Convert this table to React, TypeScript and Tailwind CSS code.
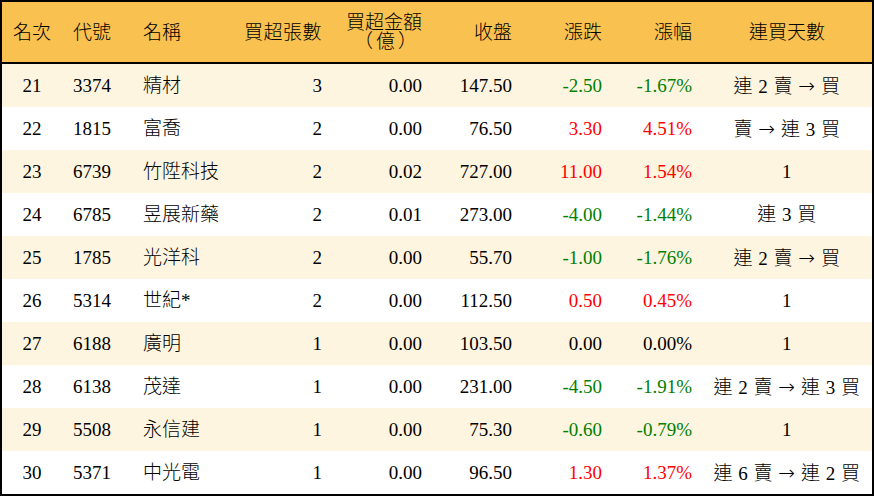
const rows = [
	{ rank: 21, code: "3374", name: "精材", lots: "3", amount: "0.00", close: "147.50", chg: "-2.50", pct: "-1.67%", streak: "連 2 賣 → 買" },
	{ rank: 22, code: "1815", name: "富喬", lots: "2", amount: "0.00", close: "76.50", chg: "3.30", pct: "4.51%", streak: "賣 → 連 3 買" },
	{ rank: 23, code: "6739", name: "竹陞科技", lots: "2", amount: "0.02", close: "727.00", chg: "11.00", pct: "1.54%", streak: "1" },
	{ rank: 24, code: "6785", name: "昱展新藥", lots: "2", amount: "0.01", close: "273.00", chg: "-4.00", pct: "-1.44%", streak: "連 3 買" },
	{ rank: 25, code: "1785", name: "光洋科", lots: "2", amount: "0.00", close: "55.70", chg: "-1.00", pct: "-1.76%", streak: "連 2 賣 → 買" },
	{ rank: 26, code: "5314", name: "世紀*", lots: "2", amount: "0.00", close: "112.50", chg: "0.50", pct: "0.45%", streak: "1" },
	{ rank: 27, code: "6188", name: "廣明", lots: "1", amount: "0.00", close: "103.50", chg: "0.00", pct: "0.00%", streak: "1" },
	{ rank: 28, code: "6138", name: "茂達", lots: "1", amount: "0.00", close: "231.00", chg: "-4.50", pct: "-1.91%", streak: "連 2 賣 → 連 3 買" },
	{ rank: 29, code: "5508", name: "永信建", lots: "1", amount: "0.00", close: "75.30", chg: "-0.60", pct: "-0.79%", streak: "1" },
	{ rank: 30, code: "5371", name: "中光電", lots: "1", amount: "0.00", close: "96.50", chg: "1.30", pct: "1.37%", streak: "連 6 賣 → 連 2 買" },
];

const grid =
	"grid grid-cols-[60px_70px_110px_90px_100px_90px_90px_90px_170px] items-center";

function tone(v: string) {
	if (v.startsWith("-")) return "text-[#008000]";
	if (parseFloat(v) > 0) return "text-[#ff0000]";
	return "text-black";
}

// the arrow glyph of Liberation Serif is tiny, so draw it from DejaVu Sans
function Streak({ text }: { text: string }) {
	const parts = text.split("→");
	return (
		<>
			{parts.map((p, i) => (
				<span key={i}>
					{i > 0 && (
						<span
							className="text-[20px]"
							style={{ fontFamily: '"DejaVu Sans", sans-serif' }}
						>
							→
						</span>
					)}
					{p}
				</span>
			))}
		</>
	);
}

export default function App() {
	return (
		<div
			className="w-[874px] h-[496px] border-2 border-black bg-white text-black text-[19px] font-light leading-none"
			style={{ fontFamily: '"Liberation Serif", "Noto Sans CJK TC", serif' }}
		>
			<div className={`${grid} h-[62px] bg-[#f9c14f] border-b-2 border-black`}>
				<div className="text-center">名次</div>
				<div className="pl-[11px]">代號</div>
				<div className="pl-[11px]">名稱</div>
				<div className="text-right pr-[10px] tracking-[0.5px]">買超張數</div>
				<div className="text-right pr-[10px] leading-[19px]">
					<div>買超金額</div>
					<div className="tracking-[3px] pr-[2px]">（億）</div>
				</div>
				<div className="text-right pr-[10px]">收盤</div>
				<div className="text-right pr-[10px]">漲跌</div>
				<div className="text-right pr-[10px]">漲幅</div>
				<div className="text-center">連買天數</div>
			</div>
			{rows.map((r, i) => (
				<div
					key={r.rank}
					className={`${grid} h-[43px] ${i % 2 === 0 ? "bg-[#fef5e0]" : "bg-white"}`}
				>
					<div className="text-center">{r.rank}</div>
					<div className="pl-[11px]">{r.code}</div>
					<div className="pl-[11px]">{r.name}</div>
					<div className="text-right pr-[10px]">{r.lots}</div>
					<div className="text-right pr-[10px]">{r.amount}</div>
					<div className="text-right pr-[10px]">{r.close}</div>
					<div className={`text-right pr-[10px] ${tone(r.chg)}`}>{r.chg}</div>
					<div className={`text-right pr-[10px] ${tone(r.pct)}`}>{r.pct}</div>
					<div className="text-center whitespace-pre tracking-[0.5px]">
						<Streak text={r.streak} />
					</div>
				</div>
			))}
		</div>
	);
}
